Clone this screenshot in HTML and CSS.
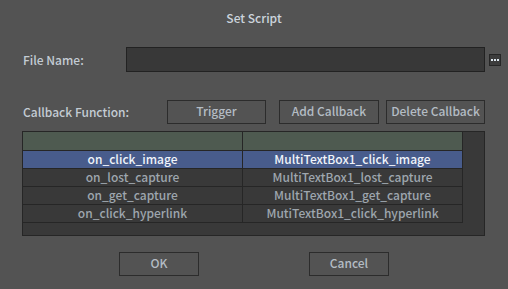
FILE: index.html
```html
<html><head>
<meta charset="UTF-8">
<title>Set Script</title>
<link rel="stylesheet" href="styles.css">
</head>
<body>
    <div class="dialog">
        <div class="title">Set Script</div>

        <div class="file-row">
            <label class="label file-label">File Name:</label>
            <div class="file-input"></div>
            <div class="browse">
                <svg viewBox="0 0 12 12" width="12" height="12">
                    <rect x="2" y="5" width="2" height="2" fill="#dfe8f0"/>
                    <rect x="5" y="5" width="2" height="2" fill="#dfe8f0"/>
                    <rect x="8" y="5" width="2" height="2" fill="#dfe8f0"/>
                </svg>
            </div>
        </div>

        <div class="callback-row">
            <label class="label callback-label">Callback Function:</label>
            <button class="btn btn-trigger">Trigger</button>
            <button class="btn btn-add">Add Callback</button>
            <button class="btn btn-delete">Delete Callback</button>
        </div>

        <div class="table">
            <div class="grid">
                <div class="cell head"></div>
                <div class="cell head"></div>

                <div class="cell selected">on_click_image</div>
                <div class="cell selected">MultiTextBox1_click_image</div>

                <div class="cell">on_lost_capture</div>
                <div class="cell">MultiTextBox1_lost_capture</div>

                <div class="cell">on_get_capture</div>
                <div class="cell">MultiTextBox1_get_capture</div>

                <div class="cell">on_click_hyperlink</div>
                <div class="cell">MutiTextBox1_click_hyperlink</div>
            </div>
        </div>

        <div class="footer">
            <button class="btn btn-footer">OK</button>
            <button class="btn btn-footer">Cancel</button>
        </div>
    </div>
</body></html>
```

FILE: styles.css
```css
* {
    margin: 0;
    padding: 0;
    box-sizing: border-box;
    font-family: 'Noto Sans CJK SC', 'Noto Sans', sans-serif;
    font-weight: 500;
}

body {
    background: #535353;
    color: #c4ccd4;
    font-size: 12px;
    width: 508px;
    height: 289px;
    overflow: hidden;
}

.dialog {
    padding: 10px 0 0 22px;
}

.title {
    text-align: center;
    line-height: 16px;
    color: #ccd4dc;
    padding-right: 22px;
}

.label {
    line-height: 16px;
    padding-left: 1px;
}

.file-row {
    display: flex;
    align-items: center;
    margin-top: 21px;
    height: 25px;
}

.file-label {
    width: 104px;
    flex-shrink: 0;
}

.file-input {
    width: 359px;
    height: 25px;
    flex-shrink: 0;
    background: #383838;
    border: 1px solid #222;
}

.browse {
    width: 12px;
    height: 12px;
    flex-shrink: 0;
    margin-left: 4px;
    background: #3c3c3c;
    border: 1px solid #262626;
    display: flex;
}

.browse svg {
    margin: -1px;
}

.callback-row {
    display: flex;
    align-items: center;
    margin-top: 28px;
    height: 24px;
}

.callback-label {
    width: 145px;
    flex-shrink: 0;
}

.btn {
    height: 24px;
    flex-shrink: 0;
    background: #535353;
    border: 1px solid #2c2c2c;
    color: #b4bcc4;
    font-size: 12px;
    line-height: 18px;
    padding-bottom: 2px;
}

.btn-trigger {
    width: 99px;
}

.btn-add {
    width: 100px;
    margin-left: 13px;
}

.btn-delete {
    width: 99px;
    margin-left: 7px;
}

.table {
    margin-top: 7px;
    width: 463px;
    height: 105px;
    background: #393939;
    border: 1px solid #262626;
}

.grid {
    display: grid;
    grid-template-columns: 220px 220px;
    grid-template-rows: 19px repeat(4, 18px);
}

.cell {
    border-right: 1px solid #262626;
    border-bottom: 1px solid #262626;
    text-align: center;
    line-height: 15px;
    color: #9ea6ae;
}

.cell.head {
    background: #4e5a50;
}

.cell.selected {
    background: #485c8c;
    color: #f0f4fa;
}

.footer {
    display: flex;
    margin-top: 16px;
    padding-left: 97px;
}

.btn-footer {
    width: 80px;
    height: 24px;
}

.btn-footer + .btn-footer {
    margin-left: 110px;
}
```
